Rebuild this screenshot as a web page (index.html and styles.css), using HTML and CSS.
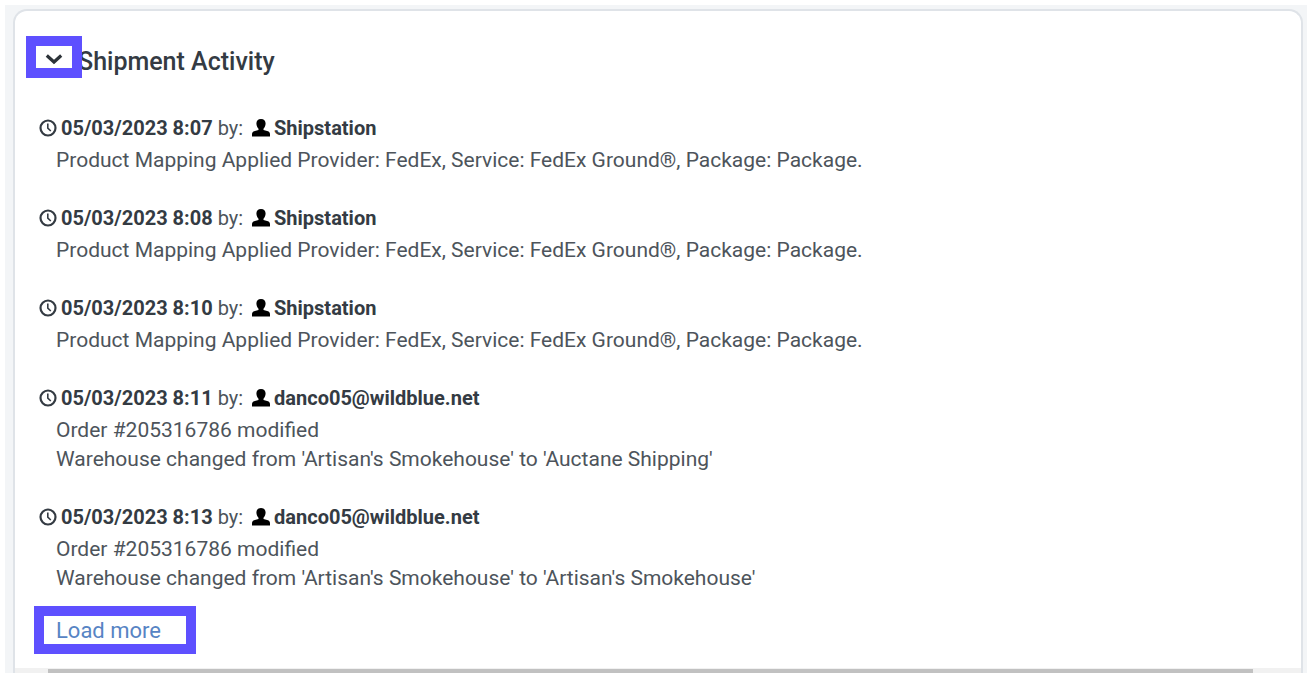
FILE: index.html
```html
<!DOCTYPE html>
<html lang="en">
<head>
	<meta charset="utf-8">
	<title>Shipment Activity</title>
	<meta name="viewport" content="width=device-width, initial-scale=1.0">
	<link rel="stylesheet" href="styles.css">
</head>
<body>

	<svg class="sprite" aria-hidden="true">
		<symbol id="clock" viewBox="0 0 18 18">
			<circle cx="9" cy="9" r="7.5" fill="none" stroke="currentColor" stroke-width="2.200"/>
			<path d="M8.800 4.500V9.200L11.800 12" fill="none" stroke="currentColor" stroke-width="1.600"/>
		</symbol>
		<symbol id="user" viewBox="0 0 18 18">
			<path d="M9 0C6 0 4.400 1.900 4.400 4.600C4.400 6.700 5.400 8.700 6.500 9.700V11L2 12.300C.6 12.900 0 13.900 0 15.400V17.500H18V15.400C18 13.900 17.400 12.900 16 12.300L11.500 11V9.700C12.600 8.700 13.600 6.700 13.600 4.600C13.600 1.900 12 0 9 0Z"/>
		</symbol>
	</svg>

	<div class="page">
		<main class="card">
			<div class="content">
				<header class="card-header">
					<button type="button" class="toggle highlight" aria-label="Collapse shipment activity" aria-expanded="true">
						<svg width="18" height="12" viewBox="0 0 18 12"><path d="M1.800 2.500L9 9L16.200 2.500" fill="none" stroke="currentColor" stroke-width="3.200"/></svg>
					</button>
					<h1>Shipment Activity</h1>
				</header>

				<ul class="activity">
					<li>
						<div class="meta"><svg class="icon clock"><use href="#clock"/></svg><b>05/03/2023 8:07</b> by: <svg class="icon user"><use href="#user"/></svg><b>Shipstation</b></div>
						<p>Product Mapping Applied Provider: FedEx, Service: FedEx Ground®, Package: Package.</p>
					</li>
					<li>
						<div class="meta"><svg class="icon clock"><use href="#clock"/></svg><b>05/03/2023 8:08</b> by: <svg class="icon user"><use href="#user"/></svg><b>Shipstation</b></div>
						<p>Product Mapping Applied Provider: FedEx, Service: FedEx Ground®, Package: Package.</p>
					</li>
					<li>
						<div class="meta"><svg class="icon clock"><use href="#clock"/></svg><b>05/03/2023 8:10</b> by: <svg class="icon user"><use href="#user"/></svg><b>Shipstation</b></div>
						<p>Product Mapping Applied Provider: FedEx, Service: FedEx Ground®, Package: Package.</p>
					</li>
					<li>
						<div class="meta"><svg class="icon clock"><use href="#clock"/></svg><b>05/03/2023 8:11</b> by: <svg class="icon user"><use href="#user"/></svg><b>danco05@wildblue.net</b></div>
						<p>Order #205316786 modified</p>
						<p>Warehouse changed from 'Artisan's Smokehouse' to 'Auctane Shipping'</p>
					</li>
					<li>
						<div class="meta"><svg class="icon clock"><use href="#clock"/></svg><b>05/03/2023 8:13</b> by: <svg class="icon user"><use href="#user"/></svg><b>danco05@wildblue.net</b></div>
						<p>Order #205316786 modified</p>
						<p>Warehouse changed from 'Artisan's Smokehouse' to 'Artisan's Smokehouse'</p>
					</li>
				</ul>

				<a href="#" class="load-more highlight">Load more</a>
			</div>
			<div class="scroll-track"><div class="scroll-thumb"></div></div>
		</main>
	</div>

</body>
</html>
```
FILE: styles.css
```css
* {
	box-sizing: border-box;
	margin: 0;
	padding: 0;
}

body {
	background: #fff;
	color: #4d545b;
	font-family: Roboto, sans-serif;
	font-size: 21px;
	line-height: 29px;
}

.sprite {
	display: none;
}

.page {
	margin: 5px;
	padding: 4px 4px 0 8px;
	background: #f3f5f7;
}

.card {
	overflow: hidden;
	border: 2px solid #dfe3e8;
	border-bottom: 0;
	border-radius: 14px 14px 0 0;
	background: #fff;
}

.content {
	padding: 25px 24px 14px;
}

.highlight {
	border: 10px solid #5e50ff;
	background: #fff;
}

.card-header {
	display: flex;
	align-items: center;
	margin: 0 0 36px -13px;
}

.toggle {
	display: flex;
	z-index: 1;
	align-items: center;
	justify-content: center;
	width: 56px;
	height: 42px;
	padding-top: 4px;
	margin-right: -4px;
	color: #2d3339;
}

h1 {
	padding-top: 8px;
	color: #343b43;
	font-size: 25px;
	font-weight: 500;
}

.activity {
	list-style: none;
}

.activity li {
	margin-bottom: 29px;
}

.activity li:last-child {
	margin-bottom: 13px;
}

.meta {
	margin-bottom: 3px;
	font-size: 20px;
}

.meta b {
	color: #343b43;
	font-weight: 700;
}

.activity p {
	padding-left: 17px;
}

.icon {
	width: 18px;
	height: 18px;
	vertical-align: -2px;
}

.clock {
	margin-right: 4px;
	color: #343b43;
}

.user {
	margin: 0 4px;
	fill: #000;
}

.load-more {
	display: inline-block;
	margin-left: -5px;
	padding: 1px 25px 0 12px;
	color: #5784c4;
	font-size: 22px;
	line-height: 27px;
	text-decoration: none;
	vertical-align: top;
}

.scroll-track {
	height: 5px;
	padding: 1px 48px 0 33px;
	background: #f1f1f1;
}

.scroll-thumb {
	height: 4px;
	background: #c1c1c1;
}
```
